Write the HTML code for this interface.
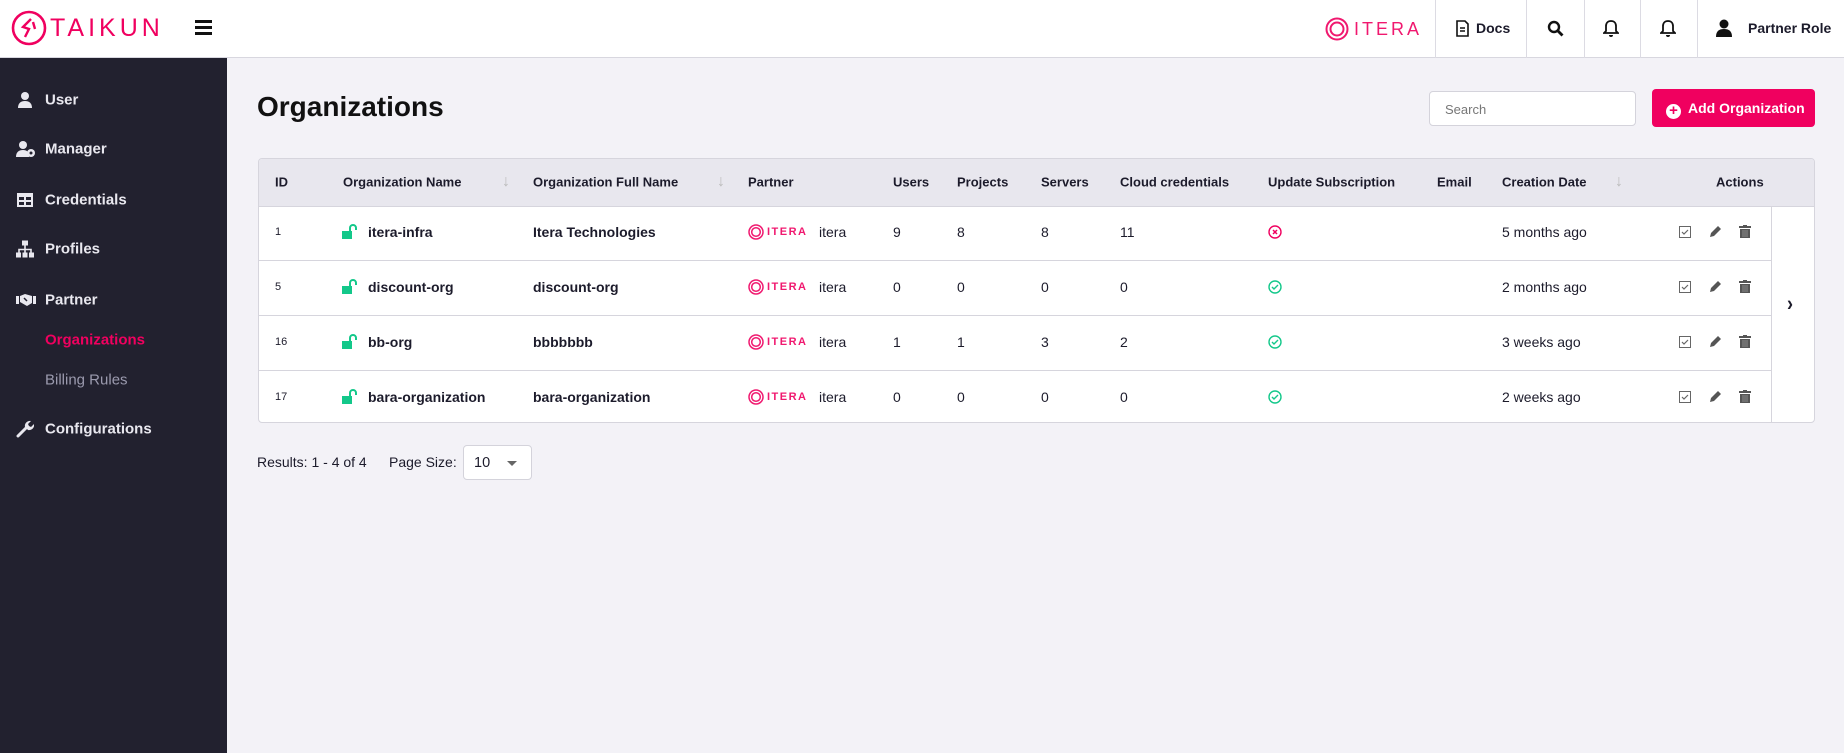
<!DOCTYPE html>
<html><head><meta charset="utf-8"><style>
*{box-sizing:border-box;margin:0;padding:0}
body{width:1844px;height:753px;overflow:hidden;font-family:"Liberation Sans",sans-serif;background:#f3f2f7;position:relative;color:#1c1b2b}
.a{position:absolute;white-space:nowrap}
#hdr{position:absolute;left:0;top:0;width:1844px;height:58px;background:#fff;border-bottom:1px solid #d8d7df}
#side{position:absolute;left:0;top:58px;width:227px;height:695px;background:#22212f}
.si{position:absolute;left:45px;color:#e9e8ef;font-size:15px;font-weight:bold;transform:translateY(-50%)}
.ic{position:absolute;left:16px;transform:translateY(-50%)}
.vd{position:absolute;top:0;width:1px;height:58px;background:#dcdbe3}
.th{position:absolute;font-size:13px;font-weight:bold;top:182px;transform:translateY(-50%);color:#1c1b2b}
.td{position:absolute;font-size:14px;transform:translateY(-50%)}
.b{font-weight:bold}
.itera{position:absolute;transform:translateY(-50%);display:flex;align-items:center;color:#f0186f;font-weight:bold;letter-spacing:1.5px}
</style></head><body>
<div id="hdr"></div>
<svg class="a" style="left:11px;top:10px" width="36" height="36" viewBox="0 0 36 36"><circle cx="18" cy="18" r="16" fill="none" stroke="#f0005f" stroke-width="2.6"/><path d="M20 9 L12 17 L18 19 L14 27 M22 12 L24 19" fill="none" stroke="#f0005f" stroke-width="2.4"/></svg>
<div class="a" style="left:50px;top:14px;font-size:25px;color:#f0005f;letter-spacing:4px;">TAIKUN</div>
<div class="a" style="left:195px;top:20px;width:17px;height:3px;background:#111;box-shadow:0 6px 0 #111,0 12px 0 #111"></div>
<div class="itera" style="left:1325px;top:29px;font-size:18px;letter-spacing:3px"><svg width="24" height="24" viewBox="0 0 24 24"><circle cx="12" cy="12" r="10.5" fill="none" stroke="#f0186f" stroke-width="2"/><circle cx="12" cy="12" r="6.5" fill="none" stroke="#f0186f" stroke-width="2"/></svg><span style="margin-left:5px;font-weight:normal">ITERA</span></div>
<div class="vd" style="left:1435px"></div><div class="vd" style="left:1526px"></div><div class="vd" style="left:1584px"></div><div class="vd" style="left:1640px"></div><div class="vd" style="left:1697px"></div>
<svg class="a" style="left:1456px;top:20px" width="13" height="17" viewBox="0 0 13 17"><path d="M1 1h8l3 3v12H1z" fill="none" stroke="#111" stroke-width="1.6"/><path d="M4 8h5M4 11h5" stroke="#111" stroke-width="1.4"/></svg>
<div class="a b" style="left:1476px;top:20px;font-size:14px">Docs</div>
<svg class="a" style="left:1547px;top:20px" width="17" height="17" viewBox="0 0 17 17"><circle cx="7" cy="7" r="5" fill="none" stroke="#111" stroke-width="2.4"/><path d="M11 11l4.5 4.5" stroke="#111" stroke-width="2.8"/></svg>
<svg class="a" style="left:1603px;top:19px" width="16" height="19" viewBox="0 0 16 19"><path d="M8 2c-3 0-5 2-5 5v5l-2 2h14l-2-2V7c0-3-2-5-5-5z" fill="none" stroke="#111" stroke-width="1.8"/><path d="M6 16a2 2 0 004 0" fill="#111"/></svg>
<svg class="a" style="left:1660px;top:19px" width="16" height="19" viewBox="0 0 16 19"><path d="M8 2c-3 0-5 2-5 5v5l-2 2h14l-2-2V7c0-3-2-5-5-5z" fill="none" stroke="#111" stroke-width="1.8"/><path d="M6 16a2 2 0 004 0" fill="#111"/></svg>
<svg class="a" style="left:1716px;top:19px" width="16" height="18" viewBox="0 0 16 18"><circle cx="8" cy="5" r="4.5" fill="#111"/><path d="M0 18c0-6 3-8 8-8s8 2 8 8z" fill="#111"/></svg>
<div class="a b" style="left:1748px;top:20px;font-size:14px">Partner Role</div>
<div id="side"></div>
<svg class="ic" style="top:100px" width="18" height="18" viewBox="0 0 18 18"><circle cx="9" cy="5" r="4" fill="#e9e8ef"/><path d="M2 17c0-5 3-7 7-7s7 2 7 7z" fill="#e9e8ef"/></svg>
<div class="si" style="top:100px">User</div>
<svg class="ic" style="top:149px" width="20" height="18" viewBox="0 0 20 18"><circle cx="7" cy="5" r="4" fill="#e9e8ef"/><path d="M0 17c0-5 3-7 7-7s6 2 6 7z" fill="#e9e8ef"/><circle cx="15" cy="13" r="4" fill="#e9e8ef"/><circle cx="15" cy="13" r="1.5" fill="#22212f"/></svg>
<div class="si" style="top:149px">Manager</div>
<svg class="ic" style="top:200px" width="18" height="16" viewBox="0 0 18 16"><rect x="1" y="1" width="16" height="14" fill="#e9e8ef"/><path d="M3 5h5v3H3zM10 5h5v3h-5zM3 10h5v3H3zM10 10h5v3h-5z" fill="#22212f"/></svg>
<div class="si" style="top:200px">Credentials</div>
<svg class="ic" style="top:249px" width="18" height="17" viewBox="0 0 18 17"><rect x="6" y="0" width="6" height="5" fill="#e9e8ef"/><path d="M9 5v4M3 12V9h12v3M9 9v3" stroke="#e9e8ef" stroke-width="1.6" fill="none"/><rect x="0" y="12" width="5" height="5" fill="#e9e8ef"/><rect x="6.5" y="12" width="5" height="5" fill="#e9e8ef"/><rect x="13" y="12" width="5" height="5" fill="#e9e8ef"/></svg>
<div class="si" style="top:249px">Profiles</div>
<svg class="ic" style="top:300px" width="20" height="14" viewBox="0 0 20 14"><rect x="0" y="3" width="3" height="8" fill="#e9e8ef"/><rect x="17" y="3" width="3" height="8" fill="#e9e8ef"/><path d="M4 3l5-2 7 2v7l-5 3-7-4z" fill="#e9e8ef"/><path d="M8 5l3 3" stroke="#22212f" stroke-width="1.5"/></svg>
<div class="si" style="top:300px">Partner</div>
<div class="si" style="top:340px;color:#f0005f">Organizations</div>
<div class="si" style="top:380px;color:#9b9aae;font-weight:normal">Billing Rules</div>
<svg class="ic" style="top:429px" width="18" height="18" viewBox="0 0 18 18"><path d="M2 16l8-8" stroke="#e9e8ef" stroke-width="3" stroke-linecap="round"/><path d="M9 7a5 5 0 016-6l-3 3 1 2 2 1 3-3a5 5 0 01-6 6z" fill="#e9e8ef"/></svg>
<div class="si" style="top:429px">Configurations</div>
<div class="a" style="left:257px;top:91px;font-size:28px;font-weight:bold;color:#111">Organizations</div>
<div class="a" style="left:1429px;top:91px;width:207px;height:35px;background:#fff;border:1px solid #d4d3db;border-radius:4px;font-size:13px;color:#777;padding:10px 0 0 15px">Search</div>
<div class="a" style="left:1652px;top:89px;width:163px;height:38px;background:#f0005f;border-radius:4px;color:#fff;font-size:14px;font-weight:bold;padding:11px 0 0 14px"><span style="display:inline-block;width:15px;height:15px;border-radius:50%;background:#fff;color:#f0005f;font-size:15px;line-height:14px;text-align:center;vertical-align:-2px;margin-right:7px">+</span>Add Organization</div>
<div class="a" style="left:258px;top:158px;width:1557px;height:265px;background:#fff;border:1px solid #d6d5dd;border-radius:4px;overflow:hidden">
<div style="position:absolute;left:0;top:0;width:100%;height:48px;background:#e8e7ee;border-bottom:1px solid #d6d5dd"></div>
<div style="position:absolute;left:0;top:101px;width:1512px;height:1px;background:#d6d5dd"></div>
<div style="position:absolute;left:0;top:156px;width:1512px;height:1px;background:#d6d5dd"></div>
<div style="position:absolute;left:0;top:211px;width:1512px;height:1px;background:#d6d5dd"></div>
<div style="position:absolute;left:1512px;top:48px;width:1px;height:220px;background:#d6d5dd"></div>
</div>
<div class="th" style="left:275px">ID</div>
<div class="th" style="left:343px">Organization Name</div>
<div class="th" style="left:502px;color:#bbb;font-weight:normal;font-size:16px">↓</div>
<div class="th" style="left:533px">Organization Full Name</div>
<div class="th" style="left:717px;color:#bbb;font-weight:normal;font-size:16px">↓</div>
<div class="th" style="left:748px">Partner</div>
<div class="th" style="left:893px">Users</div>
<div class="th" style="left:957px">Projects</div>
<div class="th" style="left:1041px">Servers</div>
<div class="th" style="left:1120px">Cloud credentials</div>
<div class="th" style="left:1268px">Update Subscription</div>
<div class="th" style="left:1437px">Email</div>
<div class="th" style="left:1502px">Creation Date</div>
<div class="th" style="left:1615px;color:#bbb;font-weight:normal;font-size:16px">↓</div>
<div class="th" style="left:1716px">Actions</div>
<div class="a b" style="left:1787px;top:304px;font-size:18px;transform:translateY(-50%) scaleY(1.2)">›</div>
<div id="rows"></div>
<script>
var d=[["1","itera-infra","Itera Technologies","9","8","8","11",0,"5 months ago",232],["5","discount-org","discount-org","0","0","0","0",1,"2 months ago",287],["16","bb-org","bbbbbbb","1","1","3","2",1,"3 weeks ago",342],["17","bara-organization","bara-organization","0","0","0","0",1,"2 weeks ago",397]];
var h="";
d.forEach(function(r){var y=r[9];
h+='<div class="td" style="left:275px;top:'+y+'px;font-size:11px">'+r[0]+'</div>';
h+='<svg class="a" style="left:342px;top:'+(y-8)+'px" width="15" height="15" viewBox="0 0 15 15"><rect x="0" y="7" width="10" height="8" fill="#13c88a"/><path d="M8 7V4a3 3 0 016 0v2" fill="none" stroke="#13c88a" stroke-width="2"/></svg>';
h+='<div class="td b" style="left:368px;top:'+y+'px">'+r[1]+'</div>';
h+='<div class="td b" style="left:533px;top:'+y+'px">'+r[2]+'</div>';
h+='<div class="itera" style="left:748px;top:'+y+'px;font-size:11px"><svg width="16" height="16" viewBox="0 0 16 16"><circle cx="8" cy="8" r="7" fill="none" stroke="#f0186f" stroke-width="1.5"/><circle cx="8" cy="8" r="4.3" fill="none" stroke="#f0186f" stroke-width="1.5"/></svg><span style="margin-left:3px">ITERA</span></div>';
h+='<div class="td" style="left:819px;top:'+y+'px">itera</div>';
h+='<div class="td" style="left:893px;top:'+y+'px">'+r[3]+'</div><div class="td" style="left:957px;top:'+y+'px">'+r[4]+'</div><div class="td" style="left:1041px;top:'+y+'px">'+r[5]+'</div><div class="td" style="left:1120px;top:'+y+'px">'+r[6]+'</div>';
var c=r[7]?'#13c88a':'#f0005f';
h+='<svg class="a" style="left:1268px;top:'+(y-7)+'px" width="14" height="14" viewBox="0 0 14 14"><circle cx="7" cy="7" r="6" fill="none" stroke="'+c+'" stroke-width="1.4"/>'+(r[7]?'<path d="M4 7l2 2 4-4" fill="none" stroke="'+c+'" stroke-width="1.4"/>':'<path d="M5 5l4 4M9 5l-4 4" stroke="'+c+'" stroke-width="1.5"/>')+'</svg>';
h+='<div class="td" style="left:1502px;top:'+y+'px">'+r[8]+'</div>';
h+='<svg class="a" style="left:1679px;top:'+(y-6)+'px" width="12" height="12" viewBox="0 0 12 12"><rect x="0.5" y="0.5" width="11" height="11" fill="none" stroke="#666" stroke-width="1"/><path d="M3 6l2 2 4-4" fill="none" stroke="#666" stroke-width="1.2"/></svg>';
h+='<svg class="a" style="left:1709px;top:'+(y-7)+'px" width="13" height="13" viewBox="0 0 13 13"><path d="M1 12l1-4 7-7 3 3-7 7z" fill="#555"/></svg>';
h+='<svg class="a" style="left:1739px;top:'+(y-7)+'px" width="12" height="13" viewBox="0 0 12 13"><rect x="0" y="1" width="12" height="2" fill="#555"/><rect x="4" y="0" width="4" height="1" fill="#555"/><path d="M1 4h10v9H1z" fill="#555"/><path d="M4 5v7M6 5v7M8 5v7" stroke="#999" stroke-width="0.8"/></svg>';
});
document.getElementById("rows").innerHTML=h;
</script>
<div class="a" style="left:257px;top:454px;font-size:14px">Results: 1 - 4 of 4</div>
<div class="a" style="left:389px;top:454px;font-size:14px">Page Size:</div>
<div class="a" style="left:463px;top:445px;width:69px;height:35px;background:#fff;border:1px solid #d4d3db;border-radius:4px;font-size:14.5px;padding:9px 0 0 10px">10<span style="position:absolute;left:43px;top:15px;border:5px solid transparent;border-top-color:#666"></span></div>
</body></html>
